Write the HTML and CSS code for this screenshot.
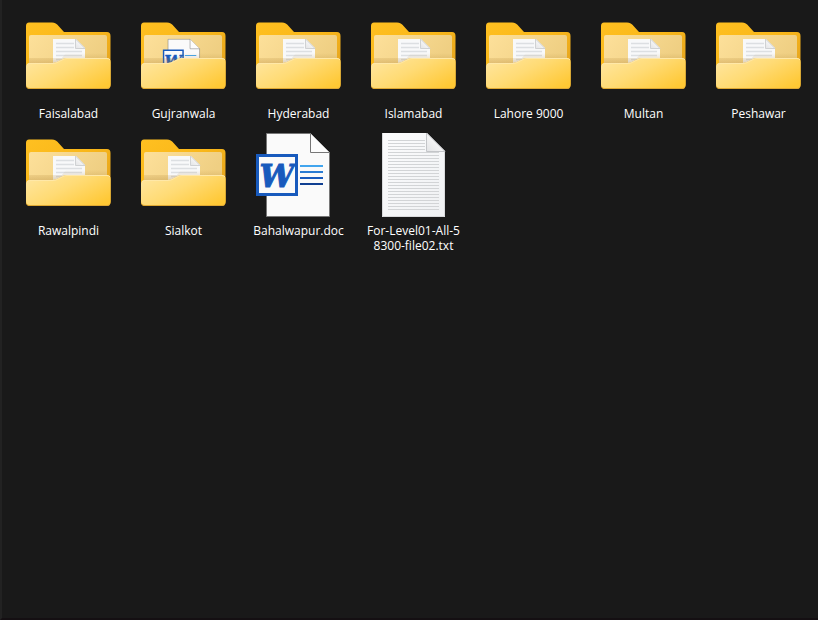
FILE: index.html
```html
<!DOCTYPE html>
<html lang="en">
<head>
<meta charset="utf-8">
<meta name="viewport" content="width=device-width, initial-scale=1">
<title>Files</title>
<link rel="stylesheet" href="styles.css">
</head>
<body>
<svg class="defs" width="0" height="0" aria-hidden="true">
  <defs>
    <linearGradient id="back" x1="0" y1="0" x2="1" y2="1">
      <stop offset="0" stop-color="#ffc021"/><stop offset=".45" stop-color="#f9b719"/><stop offset="1" stop-color="#dc9c22"/>
    </linearGradient>
    <linearGradient id="inner" x1="0" y1="0" x2="1" y2=".3">
      <stop offset="0" stop-color="#fde09a"/><stop offset="1" stop-color="#efcf83"/>
    </linearGradient>
    <linearGradient id="front" gradientUnits="userSpaceOnUse" x1="24" y1="36" x2="50" y2="86">
      <stop offset="0" stop-color="#ffe59c"/><stop offset=".45" stop-color="#ffdb75"/><stop offset="1" stop-color="#ffc834"/>
    </linearGradient>
    <linearGradient id="shade" x1="0" y1="0" x2="0" y2="1">
      <stop offset="0" stop-color="#a97b2b" stop-opacity="0"/><stop offset="1" stop-color="#a97b2b" stop-opacity=".3"/>
    </linearGradient>
    <linearGradient id="fold" x1="0" y1="1" x2=".6" y2=".3">
      <stop offset="0" stop-color="#e2e3e5"/><stop offset="1" stop-color="#fafafa"/>
    </linearGradient>
    <linearGradient id="paper" x1="0" y1="0" x2="1" y2="1">
      <stop offset="0" stop-color="#fcfcfd"/><stop offset="1" stop-color="#eff1f3"/>
    </linearGradient>
    <pattern id="rules" width="60" height="3" patternUnits="userSpaceOnUse">
      <rect width="60" height="1" fill="#d2d4d6"/>
    </pattern>
  </defs>

  <symbol id="folder-back" viewBox="0 0 87 86">
    <path d="M1 70V11Q1 7.500 4 7.500H27Q31 7.500 34 11.500L39 17H82Q85.500 17 85.500 21V70Q85.500 74 82 74H5Q1 74 1 70Z" fill="url(#back)"/>
    <path d="M4 50V22Q4 20 6 20H80Q82 20 82 22V50Z" fill="url(#inner)"/>
  </symbol>
  <symbol id="folder-front" viewBox="0 0 87 86">
    <path d="M4 43H41L32 48H4ZM41 38H82V44H36Z" fill="url(#shade)"/>
    <path d="M1 52Q1 48 5 48H28Q31 48 34 46L37 44.500Q39 43 42 43H82Q85.500 43 85.500 47V70Q85.500 74 82 74H5Q1 74 1 70Z" fill="#dfa832"/>
    <path d="M1 52Q1 48 5 48H28Q31 48 34 46L37 44.500Q39 43 42 43H82Q85.500 43 85.500 47V69Q85.500 73 82 73H5Q1 73 1 69Z" fill="url(#front)"/>
    <path d="M2 50Q3 48.500 5 48.500H28Q31 48.500 34 46.500L37 45Q39 43.500 42 43.500H82Q84 43.500 85 45" fill="none" stroke="#ffe8a8" stroke-width="1"/>
  </symbol>
  <symbol id="word" viewBox="0 0 87 86">
    <path d="M11.500 1.500H55.500L74.500 20.500V84.500H11.500Z" fill="#fafafa" stroke="#777" stroke-width="1"/>
    <path d="M55.500 1.500V20.500H74.500" fill="#fdfdfd" stroke="#777" stroke-width="1"/>
    <path d="M45 34H68" stroke="#41a5ee" stroke-width="2"/>
    <path d="M45 40H68" stroke="#2b7cd3" stroke-width="2"/>
    <path d="M45 46H68" stroke="#185abd" stroke-width="2"/>
    <path d="M45 52H68" stroke="#103f91" stroke-width="2"/>
    <rect x="2.500" y="23.500" width="39" height="39" fill="#fafafa" stroke="#185abd" stroke-width="3"/>
    <text x="22" y="55" class="word-letter">W</text>
  </symbol>
  <symbol id="text-file" viewBox="0 0 87 86">
    <path d="M12 1H57L75 19V85H12Z" fill="url(#paper)"/>
    <path d="M12.500 1V84.500H74.500V19" fill="none" stroke="#d9dadc" stroke-width="1"/>
    <g transform="translate(0 8)">
      <path d="M18 0H55V10H69V70H18Z" fill="url(#rules)"/>
    </g>
    <path d="M56.500 1V19.500H75Z" fill="url(#fold)" stroke="#c3c5c8" stroke-width="1"/>
  </symbol>
  <symbol id="mini-text" viewBox="0 0 87 86">
    <path d="M28 24H51L60 33V50H28Z" fill="#f8f9fa"/>
    <path d="M31 28.500H49M31 32.500H49M31 36.500H57M31 40.500H57M31 44.500H57" stroke="#dcdfe2" stroke-width="1.500"/>
    <path d="M50.500 24V33.500H60Z" fill="url(#fold)" stroke="#cfd1d3" stroke-width="1"/>
  </symbol>
  <symbol id="folder" viewBox="0 0 87 86">
    <use href="#folder-back" width="87" height="86"/>
    <use href="#mini-text" width="87" height="86"/>
    <use href="#folder-front" width="87" height="86"/>
  </symbol>
  <symbol id="folder-word" viewBox="0 0 87 86">
    <use href="#folder-back" width="87" height="86"/>
    <use href="#word" width="87" height="86" transform="translate(22.300 23.500) scale(.5)"/>
    <use href="#folder-front" width="87" height="86"/>
  </symbol>
</svg>

<main class="pane">
  <ul class="files">
    <li><a class="file" href="#"><svg class="icon" aria-hidden="true"><use href="#folder"/></svg><span class="name">Faisalabad</span></a></li>
    <li><a class="file" href="#"><svg class="icon" aria-hidden="true"><use href="#folder-word"/></svg><span class="name">Gujranwala</span></a></li>
    <li><a class="file" href="#"><svg class="icon" aria-hidden="true"><use href="#folder"/></svg><span class="name">Hyderabad</span></a></li>
    <li><a class="file" href="#"><svg class="icon" aria-hidden="true"><use href="#folder"/></svg><span class="name">Islamabad</span></a></li>
    <li><a class="file" href="#"><svg class="icon" aria-hidden="true"><use href="#folder"/></svg><span class="name">Lahore 9000</span></a></li>
    <li><a class="file" href="#"><svg class="icon" aria-hidden="true"><use href="#folder"/></svg><span class="name">Multan</span></a></li>
    <li><a class="file" href="#"><svg class="icon" aria-hidden="true"><use href="#folder"/></svg><span class="name">Peshawar</span></a></li>
    <li><a class="file" href="#"><svg class="icon" aria-hidden="true"><use href="#folder"/></svg><span class="name">Rawalpindi</span></a></li>
    <li><a class="file" href="#"><svg class="icon" aria-hidden="true"><use href="#folder"/></svg><span class="name">Sialkot</span></a></li>
    <li><a class="file" href="#"><svg class="icon" aria-hidden="true"><use href="#word"/></svg><span class="name">Bahalwapur.doc</span></a></li>
    <li><a class="file" href="#"><svg class="icon" aria-hidden="true"><use href="#text-file"/></svg><span class="name">For-Level01-All-5<br>8300-file02.txt</span></a></li>
  </ul>
</main>
</body>
</html>
```
FILE: styles.css
```css
* {
  box-sizing: border-box;
}

body {
  margin: 0;
  background: #191919;
  color: #fff;
  font: 12px/15px "Open Sans", "Noto Sans", sans-serif;
}

.defs {
  position: absolute;
}

.pane {
  min-height: 100vh;
  padding: 15px 0 15px 9px;
  border-left: 2px solid #222;
  border-bottom: 2px solid #140f12;
}

.files {
  display: grid;
  grid-template-columns: repeat(auto-fill, 115px);
  row-gap: 11px;
  margin: 0;
  padding: 0;
  list-style: none;
}

.file {
  display: flex;
  flex-direction: column;
  align-items: center;
  gap: 5px;
  color: inherit;
  text-align: center;
  text-decoration: none;
}

.icon {
  width: 87px;
  height: 86px;
}

.name {
  white-space: nowrap;
}

.word-letter {
  fill: #185abd;
  stroke: #185abd;
  stroke-width: 1px;
  font: italic bold 31px "DejaVu Serif", serif;
  text-anchor: middle;
}
```
